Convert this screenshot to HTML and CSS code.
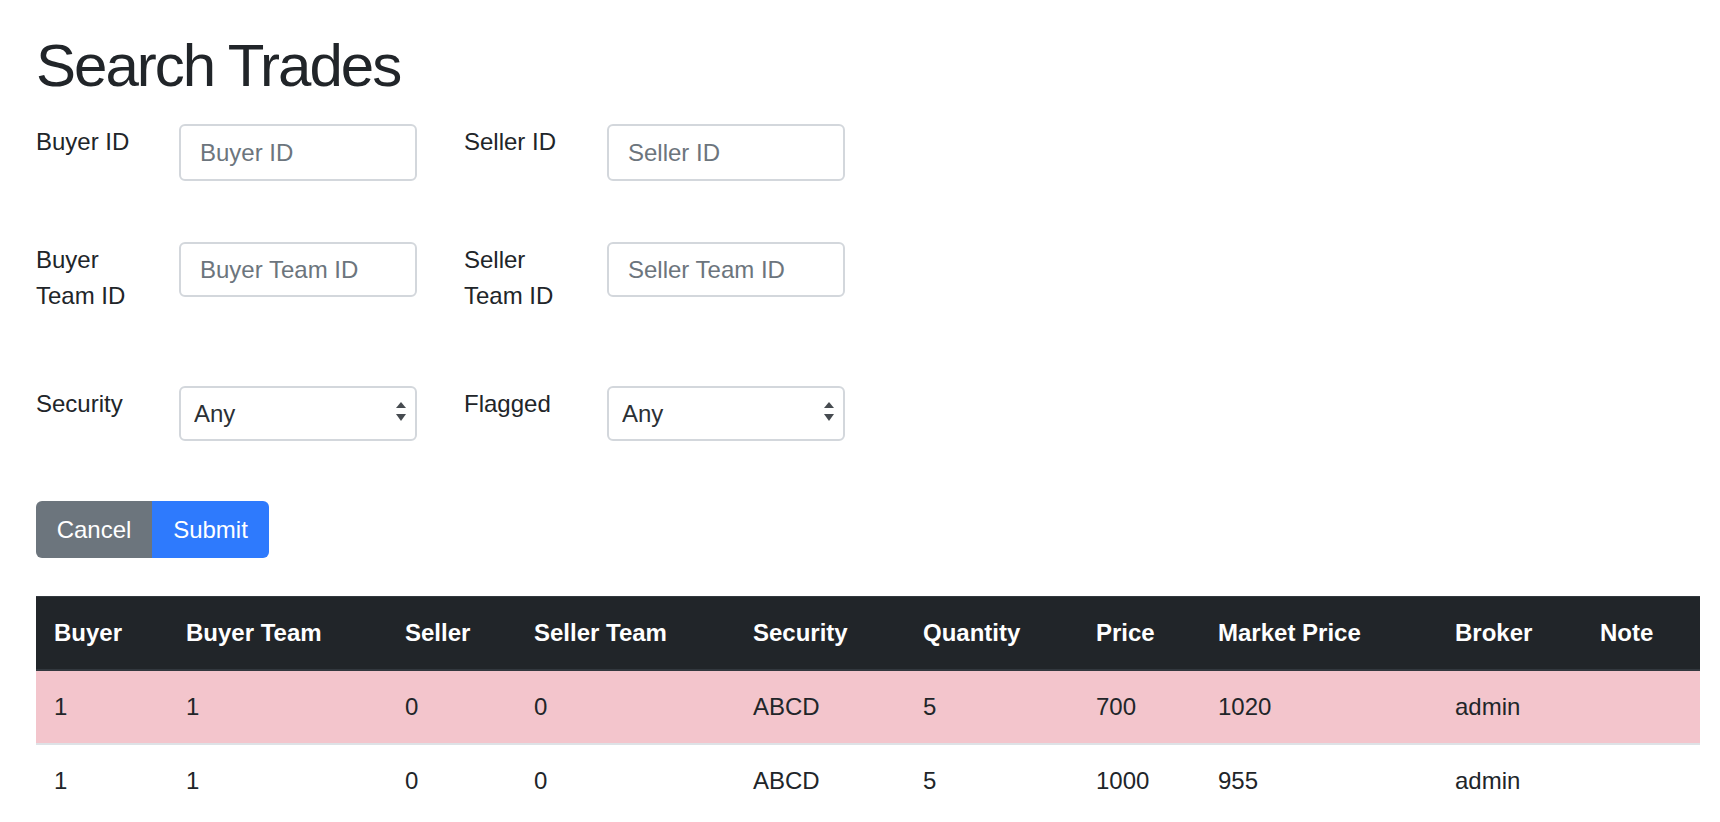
FILE: index.html
```html
<!DOCTYPE html>
<html lang="en">
<head>
<meta charset="utf-8">
<title>Search Trades</title>
<link rel="stylesheet" href="styles.css">
</head>
<body>
<div class="page">
  <h1 class="title">Search Trades</h1>
  <form class="search-form">
    <div class="form-row form-row-first">
      <div class="field">
        <label class="field-label">Buyer ID</label>
        <input class="control" type="text" placeholder="Buyer ID">
      </div>
      <div class="field">
        <label class="field-label">Seller ID</label>
        <input class="control" type="text" placeholder="Seller ID">
      </div>
    </div>
    <div class="form-row">
      <div class="field">
        <label class="field-label">Buyer Team ID</label>
        <input class="control control-short" type="text" placeholder="Buyer Team ID">
      </div>
      <div class="field">
        <label class="field-label">Seller Team ID</label>
        <input class="control control-short" type="text" placeholder="Seller Team ID">
      </div>
    </div>
    <div class="form-row">
      <div class="field">
        <label class="field-label">Security</label>
        <div class="select-wrap">
          <select class="control select"><option>Any</option></select>
          <svg class="select-arrows" width="10" height="20" viewBox="0 0 10 20"><polygon points="5,0 10,6 0,6" fill="#464b50"/><polygon points="0,12 10,12 5,19" fill="#464b50"/></svg>
        </div>
      </div>
      <div class="field">
        <label class="field-label">Flagged</label>
        <div class="select-wrap">
          <select class="control select"><option>Any</option></select>
          <svg class="select-arrows" width="10" height="20" viewBox="0 0 10 20"><polygon points="5,0 10,6 0,6" fill="#464b50"/><polygon points="0,12 10,12 5,19" fill="#464b50"/></svg>
        </div>
      </div>
    </div>
    <div class="btn-group">
      <button type="button" class="btn btn-cancel">Cancel</button>
      <button type="submit" class="btn btn-submit">Submit</button>
    </div>
  </form>

  <table class="trades">
    <colgroup>
      <col class="c-buyer"><col class="c-bteam"><col class="c-seller"><col class="c-steam"><col class="c-sec">
      <col class="c-qty"><col class="c-price"><col class="c-mkt"><col class="c-broker"><col class="c-note">
    </colgroup>
    <thead>
      <tr>
        <th>Buyer</th><th>Buyer Team</th><th>Seller</th><th>Seller Team</th><th>Security</th>
        <th>Quantity</th><th>Price</th><th>Market Price</th><th>Broker</th><th>Note</th>
      </tr>
    </thead>
    <tbody>
      <tr class="row-danger">
        <td>1</td><td>1</td><td>0</td><td>0</td><td>ABCD</td><td>5</td><td>700</td><td>1020</td><td>admin</td><td></td>
      </tr>
      <tr>
        <td>1</td><td>1</td><td>0</td><td>0</td><td>ABCD</td><td>5</td><td>1000</td><td>955</td><td>admin</td><td></td>
      </tr>
    </tbody>
  </table>
</div>
</body>
</html>
```

FILE: styles.css
```css
* { box-sizing: border-box; }

html, body {
  margin: 0;
  padding: 0;
  background: #ffffff;
}

body {
  font-family: "Liberation Sans", Arial, sans-serif;
  font-size: 24px;
  line-height: 36px;
  color: #212529;
  overflow: hidden;
}

.page {
  padding: 30px 20px 0 36px;
}

.title {
  margin: 0 0 22px 0;
  font-size: 60px;
  line-height: 72px;
  font-weight: 400;
  letter-spacing: -2px;
  color: #212529;
}

.search-form {
  display: flex;
  flex-direction: column;
  align-items: flex-start;
}

.form-row {
  display: flex;
  align-items: flex-start;
  gap: 47px;
  margin-bottom: 60px;
}

.form-row-first {
  margin-bottom: 61px;
}

.field {
  display: flex;
  align-items: flex-start;
}

.field-label {
  width: 143px;
  padding-right: 23px;
  margin-bottom: 12px;
  line-height: 36px;
}

.control {
  width: 238px;
  height: 57px;
  padding: 0 19px;
  font-family: "Liberation Sans", Arial, sans-serif;
  font-size: 24px;
  color: #495057;
  background: #ffffff;
  border: 2px solid #d3d7dc;
  border-radius: 6px;
  outline: none;
}

.control-short {
  height: 55px;
}

.control::placeholder {
  color: #6c757d;
  opacity: 1;
}

.select-wrap {
  position: relative;
  width: 238px;
}

.select {
  appearance: none;
  -webkit-appearance: none;
  padding: 0 13px;
  height: 55px;
  color: #2b3035;
}

.select-arrows {
  position: absolute;
  right: 11px;
  top: 16px;
  pointer-events: none;
}

.btn-group {
  display: flex;
  margin-bottom: 38px;
}

.btn {
  font-family: "Liberation Sans", Arial, sans-serif;
  font-size: 24px;
  line-height: 36px;
  height: 57px;
  padding: 0 20px;
  border: none;
  color: #ffffff;
  cursor: pointer;
}

.btn-cancel {
  background: #6c757d;
  border-radius: 6px 0 0 6px;
  width: 116px;
}

.btn-submit {
  background: #2e7afd;
  border-radius: 0 6px 6px 0;
  width: 117px;
}

.trades {
  width: 1664px;
  table-layout: fixed;
  border-collapse: collapse;
}

.c-buyer { width: 132px; }
.c-bteam { width: 219px; }
.c-seller { width: 129px; }
.c-steam { width: 219px; }
.c-sec { width: 170px; }
.c-qty { width: 173px; }
.c-price { width: 122px; }
.c-mkt { width: 237px; }
.c-broker { width: 145px; }
.c-note { width: 118px; }

.trades th,
.trades td {
  padding: 18px 18px;
  text-align: left;
  line-height: 36px;
  white-space: nowrap;
}

.trades th {
  background: #212529;
  color: #ffffff;
  font-weight: 700;
  border-top: 1px solid #32383e;
  border-bottom: 2px solid #32383e;
}

.trades td {
  border-top: 2px solid #dee2e6;
}

.trades tbody tr:first-child td {
  border-top: 0;
}

.row-danger td {
  background: #f3c5cc;
}
```
